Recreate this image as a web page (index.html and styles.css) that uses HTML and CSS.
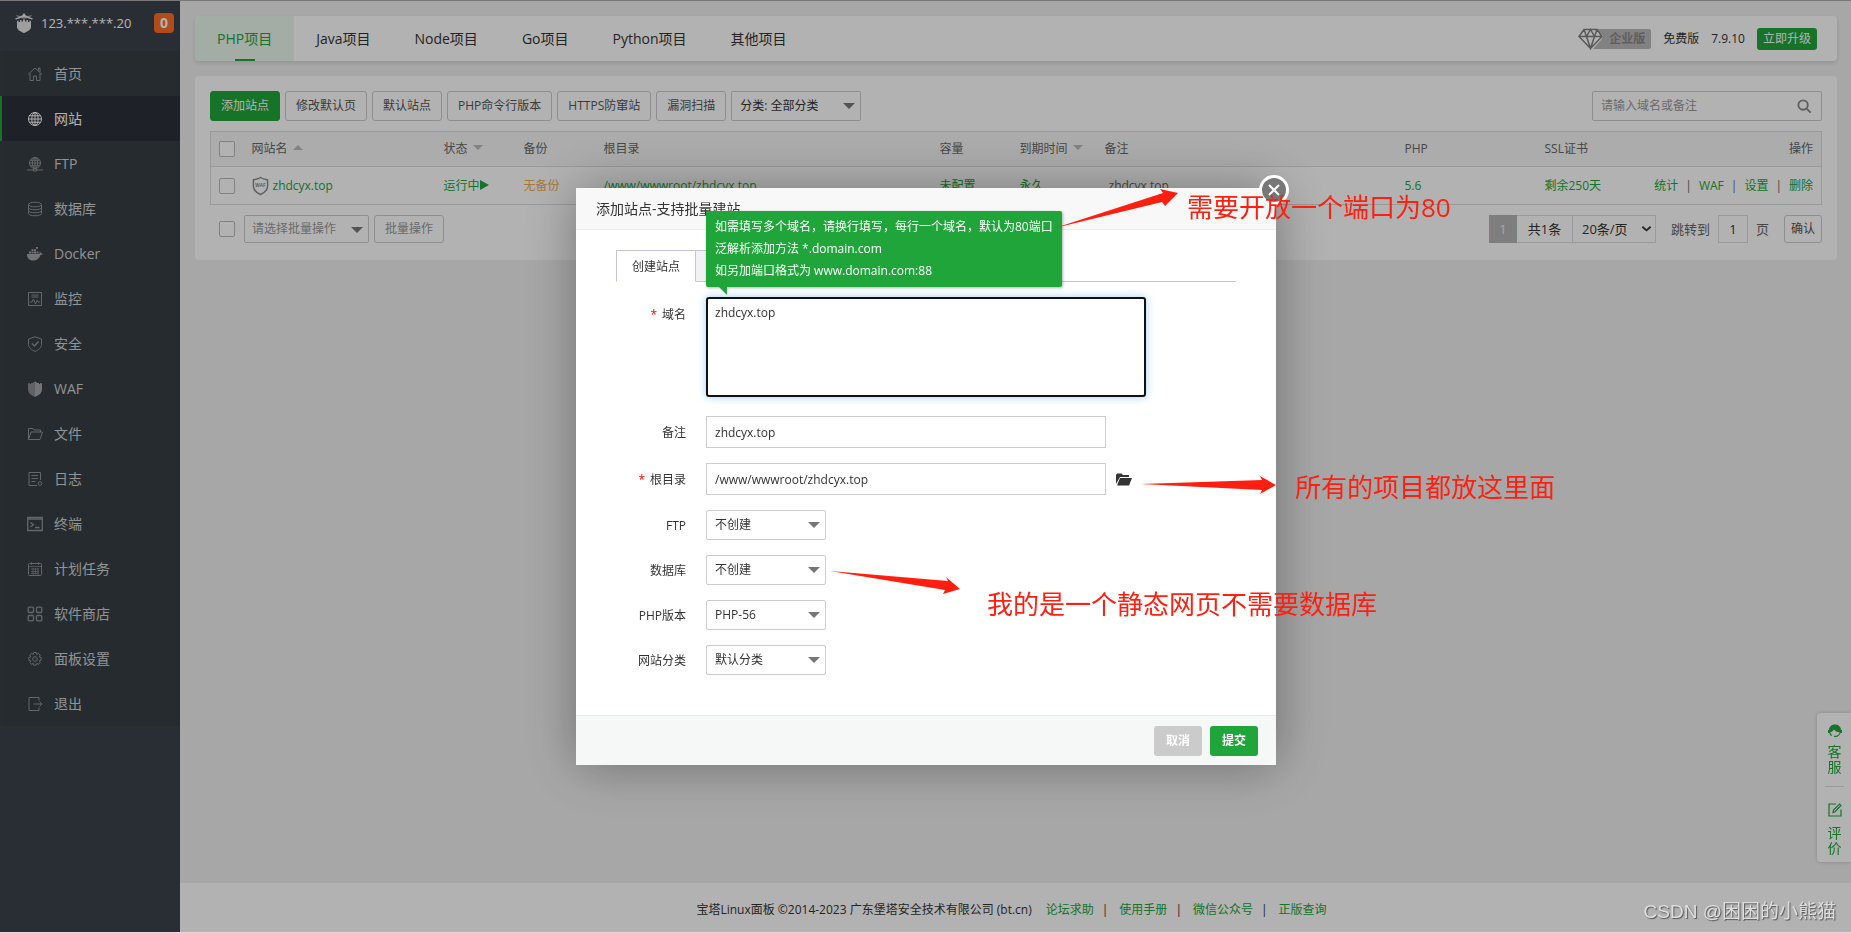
FILE: index.html
```html
<!DOCTYPE html>
<html lang="zh-CN">
<head>
<meta charset="utf-8">
<title>宝塔Linux面板</title>
<link rel="stylesheet" href="styles.css">
</head>
<body>
<div class="layout">
  <aside class="sidebar">
    <div class="server">
      <svg class="server-logo" viewBox="0 0 18 20" fill="currentColor"><path d="M0 5.500 4 4 7 2.500 9 0l2 2.500L14 4l4 1.500-1 1L9 4 1 6.500z"/><path d="M1 2l6 1.500L9 4l2-.5L17 2l-1 1.500L9 6 2 3.500z" opacity=".6"/><path d="M2 8l1.500-.5V9H5V7h1.500v1.500H8V6.500h2v2h1.500V7H13v2h1.500V7.500L16 8v6c0 2.500-3 4.500-7 6-4-1.500-7-3.500-7-6z"/></svg>
      <span class="server-ip">123.***.***.20</span>
      <span class="server-badge">0</span>
    </div>
    <nav class="menu">
      <a href="#"><svg viewBox="0 0 16 16"><path d="M1 8.500 8 2l7 6.500M3 7.500V14.500h3.500V10h3v4.500H13V7.500M11.500 4.500V2H13v4"/></svg>首页</a>
      <a href="#" class="active"><svg viewBox="0 0 16 16"><circle cx="8" cy="8" r="6.500"/><ellipse cx="8" cy="8" rx="3.200" ry="6.500"/><path d="M8 1.500v13M1.500 8h13M2.500 4.800h11M2.500 11.200h11"/></svg>网站</a>
      <a href="#"><svg viewBox="0 0 16 16"><circle cx="8" cy="7" r="5.500"/><ellipse cx="8" cy="7" rx="2.700" ry="5.500"/><path d="M8 1.500v11M2.500 7h11M3.500 4.300h9M3.500 9.700h9M0 14h6.500M9.500 14H16"/><path d="M6.500 13h3v2h-3z"/></svg>FTP</a>
      <a href="#"><svg viewBox="0 0 16 16"><ellipse cx="8" cy="3.500" rx="6.500" ry="2.300"/><path d="M1.500 3.500v9c0 3 13 3 13 0v-9M1.500 6.500c0 3 13 3 13 0M1.500 9.500c0 3 13 3 13 0"/></svg>数据库</a>
      <a href="#"><svg viewBox="0 0 16 16" class="solid"><path d="M0 8h11.500c1 0 1.500-.8 1.200-2.500 1 .6 1.300 1.300 1.300 2 .8-.2 1.500 0 2 .3-.5.900-1.500 1.200-2.500 1.200C12.500 12.500 10 14.500 6 14.500 2 14.500 0 12 0 8z"/><path d="M2 5.500h2v2H2zM4.500 5.500h2v2h-2zM7 5.500h2v2H7zM9.500 5.500h2v2h-2zM4.500 3.200h2v1.800h-2zM7 3.200h2v1.800H7zM9 1h2v1.700H9z"/></svg>Docker</a>
      <a href="#"><svg viewBox="0 0 16 16"><path d="M1.500 1.500h13v13h-13zM4.500 4h7M4.500 6h7M3 11h2l1.500-3 2 5L10 9.500l1 1.500h2"/></svg>监控</a>
      <a href="#"><svg viewBox="0 0 16 16"><path d="M8 .8 14.500 3v5.500c0 3-3 5.500-6.500 6.900C4.500 14 1.500 11.500 1.500 8.500V3z"/><path d="M5 7.500 7.500 10l4-4.500" stroke-width="1.500"/></svg>安全</a>
      <a href="#"><svg viewBox="0 0 16 16" class="solid"><path d="M1 2.500 3 2v1h1V2h2v-.5L8 .5V16c-4-2-7-3.500-7-8z" opacity=".75"/><path d="M8 .5l2 1V2h2v1h1V2l2 .5V8c0 4.500-3 6-7 8z"/></svg>WAF</a>
      <a href="#"><svg viewBox="0 0 16 16"><path d="M1.500 13.500v-11H6l1 1.500h6.500v2M1.500 13.500 4 6h11.500L13 13.500z"/></svg>文件</a>
      <a href="#"><svg viewBox="0 0 16 16"><path d="M10 14.500H2v-13h11.500V9M4.500 4.500h6.500M4.500 7.500h6.500M4.500 10.500h4"/><circle cx="13" cy="12.500" r="1.800"/></svg>日志</a>
      <a href="#"><svg viewBox="0 0 16 16"><path d="M.7 1.500h14.600v13H.7zM.7 3.200h14.600M3.500 6.500l3 2.200-3 2.200M8 11.500h4.500" stroke-width="1.300"/></svg>终端</a>
      <a href="#"><svg viewBox="0 0 16 16"><rect x="1.500" y="2.500" width="13" height="12" rx="1"/><path d="M1.500 5.500h13M4.500 1v3M11.500 1v3M4 8h8M4 10.500h8M4 12.500h8M6 7v6.500M8.500 7v6.500M11 7v6.500" stroke-width=".7"/></svg>计划任务</a>
      <a href="#"><svg viewBox="0 0 16 16" stroke-width="1.300"><rect x="1.200" y="1.200" width="5.300" height="5.300" rx="1"/><rect x="9.500" y="1.200" width="5.300" height="5.300" rx="1"/><rect x="1.200" y="9.500" width="5.300" height="5.300" rx="1"/><rect x="9.500" y="9.500" width="5.300" height="5.300" rx="1"/></svg>软件商店</a>
      <a href="#"><svg viewBox="0 0 16 16"><path d="M6.800 1.500h2.400l.5 1.900 1.800-1 1.700 1.700-1 1.800 1.900.5v2.900l-1.900.5 1 1.800-1.700 1.700-1.800-1-.5 1.900H6.800l-.5-1.900-1.800 1-1.700-1.700 1-1.800-1.900-.5V6.400l1.900-.5-1-1.800 1.700-1.700 1.800 1z"/><circle cx="8" cy="8" r="2.300"/></svg>面板设置</a>
      <a href="#"><svg viewBox="0 0 16 16"><path d="M12 4.500v-3H2v13h10v-3M6.500 8h8.500M12.500 5.500 15 8l-2.500 2.500"/></svg>退出</a>
    </nav>
  </aside>

  <div class="page">
    <main class="content">
      <header class="topbar">
        <nav class="tabs">
          <a href="#" class="active">PHP项目</a>
          <a href="#">Java项目</a>
          <a href="#">Node项目</a>
          <a href="#">Go项目</a>
          <a href="#">Python项目</a>
          <a href="#">其他项目</a>
        </nav>
        <div class="license">
          <span class="edition"><svg viewBox="0 0 26 22"><path class="gem-back" d="M19 1h7v20H15l8-9 2-4z"/><path class="gem" d="M1 8.500 6 1.500h13l5 7-11.500 12zM1 8.500h23M6 1.500l2.500 7 4 12 4-12L19 1.500M8.500 8.500l4-7 4 7"/></svg><b>企业版</b></span>
          <span>免费版</span>
          <span>7.9.10</span>
          <button type="button" class="upgrade">立即升级</button>
        </div>
      </header>

      <section class="panel">
        <div class="toolbar">
          <button type="button" class="btn primary">添加站点</button>
          <button type="button" class="btn">修改默认页</button>
          <button type="button" class="btn">默认站点</button>
          <button type="button" class="btn">PHP命令行版本</button>
          <button type="button" class="btn">HTTPS防窜站</button>
          <button type="button" class="btn">漏洞扫描</button>
          <span class="select category"><select aria-label="分类"><option>分类: 全部分类</option></select></span>
          <label class="search">
            <input type="text" placeholder="请输入域名或备注" aria-label="搜索">
            <svg viewBox="0 0 16 16"><circle cx="6.500" cy="6.500" r="5"/><path d="m10.500 10.500 4 4"/></svg>
          </label>
        </div>

        <table class="sites">
          <colgroup><col class="c-check"><col class="c-name"><col class="c-s"><col class="c-s"><col class="c-root"><col class="c-s"><col class="c-date"><col class="c-note"><col class="c-php"><col class="c-ssl"><col></colgroup>
          <thead>
            <tr><th><input type="checkbox" aria-label="全选"></th><th>网站名<i class="sort up"></i></th><th>状态<i class="sort"></i></th><th>备份</th><th>根目录</th><th>容量</th><th>到期时间<i class="sort"></i></th><th>备注</th><th>PHP</th><th>SSL证书</th><th class="right">操作</th></tr>
          </thead>
          <tbody>
            <tr>
              <td><input type="checkbox" aria-label="zhdcyx.top"></td>
              <td><a href="#" class="site"><svg viewBox="0 0 18 20"><path d="M9 1c2 1.500 5 2 7.500 2.500V10c0 4-3 7-7.500 9C4.500 17 1.500 14 1.500 10V3.500C4 3 7 2.500 9 1z"/><text x="9" y="11" text-anchor="middle">WAF</text></svg>zhdcyx.top</a></td>
              <td><a href="#" class="running">运行中<i></i></a></td>
              <td><a href="#" class="warn">无备份</a></td>
              <td><a href="#">/www/wwwroot/zhdcyx.top</a></td>
              <td><a href="#">未配置</a></td>
              <td><a href="#">永久</a></td>
              <td class="note">zhdcyx.top</td>
              <td><a href="#">5.6</a></td>
              <td><a href="#">剩余250天</a></td>
              <td class="right ops"><a href="#">统计</a>|<a href="#">WAF</a>|<a href="#">设置</a>|<a href="#">删除</a></td>
            </tr>
          </tbody>
        </table>

        <div class="bottom">
          <input type="checkbox" aria-label="批量选择">
          <span class="select batch"><select aria-label="批量操作"><option>请选择批量操作</option></select></span>
          <button type="button" class="btn small muted">批量操作</button>
          <div class="pager">
            <span class="current">1</span><span class="total">共1条</span>
            <span class="per"><select aria-label="每页条数"><option>20条/页</option></select><svg viewBox="0 0 12 8"><path d="m1.500 1.500 4.500 4 4.500-4"/></svg></span>
            <label for="jump" class="jump">跳转到</label><input id="jump" type="text" value="1"><span class="unit">页</span>
            <button type="button" class="btn small confirm">确认</button>
          </div>
        </div>
      </section>
    </main>

    <footer class="footer">
      <span>宝塔Linux面板 ©2014-2023 广东堡塔安全技术有限公司 (bt.cn)</span>
      <a href="#">论坛求助</a><i>|</i><a href="#">使用手册</a><i>|</i><a href="#">微信公众号</a><i>|</i><a href="#">正版查询</a>
    </footer>
  </div>
</div>

<div class="float">
  <a href="#"><svg viewBox="0 0 14 14"><path class="fill" d="M1 6C1 2.500 4 .5 7 .5S13 2.500 13 6h1v3h-1.500c-.5 2-2.500 3.500-4 4H6v-1.200h2.500C10 11.300 11.500 10 11.800 8.500 9 8 7 7 6 5.500 5 7 3.500 8 2.200 8.200c.3 1.300 1 2.300 2 3L3 12C2 11 1.500 10 1.300 9H0V6z"/></svg><span>客服</span></a>
  <a href="#"><svg viewBox="0 0 14 14"><path d="M8 1H1v12h12V6.500M5 9.500 5.500 7 11.500 1 13 2.500 7 8.700z"/></svg><span>评价</span></a>
</div>

<div class="mask">
  <section class="modal" role="dialog" aria-labelledby="dialog-title">
    <h2 id="dialog-title">添加站点-支持批量建站</h2>
    <button type="button" class="close" aria-label="关闭"><svg viewBox="0 0 12 12"><path d="m1 1 10 10M11 1 1 11"/></svg></button>
    <form class="form">
      <div class="form-tabs"><button type="button" class="on">创建站点</button><button type="button" aria-label="批量创建"></button></div>
      <div class="row tall"><label for="domain"><em>*</em>域名</label><textarea id="domain">zhdcyx.top</textarea></div>
      <div class="row"><label for="remark">备注</label><input id="remark" type="text" value="zhdcyx.top"></div>
      <div class="row"><label for="root"><em>*</em>根目录</label><input id="root" type="text" value="/www/wwwroot/zhdcyx.top"><svg class="folder" viewBox="0 0 16 13"><path d="M0 11V2L1 .5h4.500L7 2h6v2H4z"/><path d="M4 5h12l-3 7.500H1z"/></svg></div>
      <div class="row"><label for="ftp">FTP</label><span class="select"><select id="ftp"><option>不创建</option></select></span></div>
      <div class="row"><label for="db">数据库</label><span class="select"><select id="db"><option>不创建</option></select></span></div>
      <div class="row"><label for="php">PHP版本</label><span class="select"><select id="php"><option>PHP-56</option></select></span></div>
      <div class="row"><label for="cat">网站分类</label><span class="select"><select id="cat"><option>默认分类</option></select></span></div>
    </form>
    <div class="actions"><button type="button" class="cancel">取消</button><button type="button" class="submit">提交</button></div>

    <div class="tip">如需填写多个域名，请换行填写，每行一个域名，默认为80端口<br>泛解析添加方法 *.domain.com<br>如另加端口格式为 www.domain.com:88</div>

    <svg class="arrows" viewBox="0 0 700 577"><path d="M479 40 587 5 584 1l18 4-13 13-3-4z"/><path d="m565 296 121-4-2-4 16 9-16 9 2-4z"/><path d="m254 383 118 10-2-4 14 12-17 5 2-4z"/></svg>
    <p class="mark m1">需要开放一个端口为80</p>
    <p class="mark m2">所有的项目都放这里面</p>
    <p class="mark m3">我的是一个静态网页不需要数据库</p>
  </section>
</div>
<div class="watermark">CSDN @困困的小熊猫</div>
</body>
</html>
```
FILE: styles.css
```css
* { box-sizing: border-box; }
body {
  margin: 0;
  font: 12px/18px "Open Sans", "Noto Sans CJK SC", sans-serif;
  color: #333;
  background: #f0f0f0;
}
a { color: #20a53a; text-decoration: none; }
button, input, select, textarea { font: inherit; color: inherit; margin: 0; }
i, em { font-style: normal; }

.layout { display: flex; min-height: 100vh; padding-top: 1px; }

/* sidebar */
.sidebar { flex: 0 0 180px; background: #3c424d; }
.server { display: flex; align-items: center; height: 50px; padding: 0 6px 6px 15px; font-size: 14px; color: #fff; }
.server-logo { width: 18px; height: 20px; margin-right: 8px; color: #e4e4e4; }
.server-ip { font-size: 13px; }
.server-badge {
  margin-left: auto; width: 20px; height: 20px; border-radius: 4px;
  background: #fc6d26; text-align: center; line-height: 20px; font-weight: 700;
}
.menu a {
  display: flex; align-items: center; gap: 11px; height: 45px; padding-left: 25px;
  border-left: 2px solid #3a4047; background: #363e43; color: #d0d4d6; font-size: 14px;
}
.menu a.active { border-color: #20a53a; background: #2c3038; color: #fff; }
.menu svg { width: 16px; height: 16px; fill: none; stroke: #8f9497; }
.menu .solid { fill: #a4a7a9; stroke: none; }
.menu .active svg { stroke: #fff; }

/* page */
.page { flex: 1; min-width: 0; display: flex; flex-direction: column; }
.content { flex: 1; padding: 15px 14px 0 15px; }
.topbar {
  display: flex; justify-content: space-between; height: 45px; margin-bottom: 15px;
  background: #fff; border-radius: 4px; box-shadow: 0 2px 4px rgba(0,0,0,.12);
}
.tabs { display: flex; font-size: 14px; }
.tabs a { position: relative; padding: 0 22px; line-height: 45px; color: #333; }
.tabs .active { background: #eaf6ec; color: #20a53a; border-radius: 4px 0 0 4px; }
.tabs .active::after {
  content: ""; position: absolute; left: 50%; bottom: 0; width: 20px; height: 2px;
  margin-left: -10px; background: #20a53a;
}
.license { display: flex; align-items: center; gap: 12px; padding: 0 20px 0 0; }
.edition { display: flex; align-items: center; height: 20px; background: linear-gradient(90deg, transparent 26px, #bbb 26px); border-radius: 2px; }
.edition svg { width: 26px; height: 22px; }
.edition b { padding: 0 6px 0 5px; color: #888; }
.gem-back { fill: #bbb; }
.gem { fill: #fff; stroke: #808080; stroke-width: 1.5; }
.upgrade { height: 22px; padding: 0 6px; border: 0; border-radius: 3px; background: #20a53a; color: #fff; }

.panel { padding: 15px 15px 17px; background: #fff; border-radius: 4px; }
.toolbar { display: flex; gap: 5px; margin-bottom: 10px; }
.btn { height: 30px; padding: 0 10px; border: 1px solid #ccc; border-radius: 3px; background: #fff; color: #555; }
.btn.primary { background: #20a53a; border-color: #20a53a; color: #fff; }
.btn.small { height: 28px; }
.btn.muted { color: #999; }
.btn.confirm { padding: 0 6px; margin-left: 15px; }

.select { position: relative; display: block; width: 120px; height: 30px; }
.select select {
  appearance: none; width: 100%; height: 100%; padding: 0 24px 0 8px;
  border: 1px solid #ccc; border-radius: 2px; background: #fff; color: #333;
}
.select::after {
  content: ""; position: absolute; right: 6px; top: 12px;
  border: 6px solid transparent; border-top-color: #777; border-bottom: 0;
  pointer-events: none;
}
.category { width: 130px; }
.batch { width: 125px; height: 28px; }
.batch select { padding-left: 7px; color: #999; }

.search {
  display: flex; align-items: center; width: 230px; height: 30px; margin-left: auto;
  padding: 0 9px 0 8px; border: 1px solid #ccc; border-radius: 2px;
}
.search input { flex: 1; min-width: 0; padding: 0; border: 0; background: none; }
.search input::placeholder { color: #999; }
.search svg { width: 15px; height: 15px; fill: none; stroke: #888; stroke-width: 2; }

input[type=checkbox] { appearance: none; display: block; width: 16px; height: 16px; border: 1px solid #bbb; border-radius: 2px; background: #fff; }

.sites { width: 100%; table-layout: fixed; border-collapse: collapse; border: 1px solid #ddd; margin-bottom: 10px; }
.sites th { height: 35px; padding: 0 8px; background: #f6f6f6; border-bottom: 1px solid #ddd; text-align: left; font-weight: 400; color: #666; white-space: nowrap; }
.sites td { height: 38px; padding: 0 8px; white-space: nowrap; color: #666; }
.sites .right { text-align: right; }
.sites .note { padding-left: 12px; }
.ops a { margin: 0 7px; }
.ops a:first-child { margin-left: 0; }
.ops a:last-child { margin-right: 0; }
.c-check { width: 33px; }
.c-name { width: 192px; }
.c-s { width: 80px; }
.c-root { width: 336px; }
.c-date { width: 85px; }
.c-note { width: 300px; }
.c-php { width: 140px; }
.c-ssl { width: 90px; }
.sort { display: inline-block; margin: 0 0 3px 5px; border: 5px solid transparent; border-top-color: #bbb; border-bottom: 0; }
.sort.up { border-top: 0; border-bottom: 5px solid #bbb; }
.site { display: flex; align-items: center; gap: 4px; }
.site svg { width: 17px; height: 20px; fill: none; stroke: #888; stroke-width: 1.5; }
.site text { font-size: 5px; font-weight: 700; fill: #888; stroke: none; }
.running i { display: inline-block; border: 5px solid transparent; border-left: 9px solid #20a53a; border-right: 0; }
.sites .warn { color: #f0ad4e; }

.bottom { display: flex; align-items: center; gap: 5px; padding-left: 9px; }
.bottom > input { margin-right: 4px; }
.pager { display: flex; align-items: center; margin-left: auto; height: 28px; font-size: 13px; }
.pager .current { width: 28px; line-height: 28px; text-align: center; background: #b5b5b5; color: #eee; }
.pager .total { width: 56px; line-height: 26px; border: 1px solid #ddd; border-left: 0; text-align: center; }
.per { position: relative; width: 83px; height: 28px; }
.per select { appearance: none; width: 100%; height: 28px; padding: 0 20px 0 9px; border: 1px solid #ddd; border-left: 0; background: #fff; }
.per svg { position: absolute; right: 4px; top: 10px; width: 11px; height: 8px; fill: none; stroke: #333; stroke-width: 2; pointer-events: none; }
.jump { margin: 0 8px 0 15px; color: #666; }
.pager input { width: 30px; height: 28px; padding: 0; border: 1px solid #ddd; text-align: center; background: #fff; }
.unit { margin-left: 8px; color: #666; }
.pager .btn { font-size: 12px; }

.footer { display: flex; justify-content: center; height: 50px; padding: 2px 8px 0 0; background: #fff; line-height: 50px; }
.footer span { margin-right: 14px; }
.footer i { margin: 0 11px 0 8px; }

/* floating service bar */
.float {
  position: fixed; right: 0; bottom: 71px; width: 34px; padding: 11px 7px 4px 8px;
  background: #fff; border-radius: 4px 0 0 4px; box-shadow: 0 0 4px rgba(0,0,0,.2);
}
.float a { display: flex; flex-direction: column; align-items: center; gap: 6px; font-size: 14px; line-height: 15px; padding-bottom: 12px; }
.float a + a { border-top: 1px solid #ddd; padding: 16px 0 3px; gap: 8px; }
.float span { width: 14px; }
.float svg { width: 14px; height: 14px; fill: none; stroke: #20a53a; stroke-width: 1.200; }
.float .fill { fill: #20a53a; stroke: none; }

/* dialog */
.mask {
  position: fixed; inset: 0; display: flex; justify-content: center; align-items: flex-start;
  padding: 187px 0 0 1px; background: rgba(0,0,0,.3); background-clip: padding-box;
  border-top: 1px solid #777; border-bottom: 1px solid #ddd;
}
.modal { position: relative; width: 700px; background: #fff; box-shadow: 1px 1px 50px rgba(0,0,0,.35); }
.modal h2 { height: 42px; margin: 0; padding: 0 20px; background: #f8f8f8; border-bottom: 1px solid #eee; font-size: 14px; font-weight: 400; line-height: 42px; }
.close {
  position: absolute; right: -13px; top: -13px; width: 30px; height: 30px; padding: 0;
  display: grid; place-items: center; border: 3px solid #fff; border-radius: 50%; background: #777;
}
.close svg { width: 12px; height: 12px; stroke: #fff; stroke-width: 2; }
.form { padding: 20px 40px 25px; }
.form-tabs { display: flex; height: 32px; margin-bottom: 15px; border-bottom: 1px solid #c8c5d3; }
.form-tabs button { width: 80px; height: 32px; padding: 2px 0 0; border: 1px solid #c8c5d3; border-left: 0; background: #f2f2f5; }
.form-tabs .on { border-left: 1px solid #c8c5d3; border-bottom-color: #fff; background: #fff; }
.row { display: flex; align-items: center; margin-bottom: 15px; }
.row.tall { align-items: flex-start; margin-bottom: 19px; }
.row label { width: 70px; margin-right: 20px; padding-top: 2px; text-align: right; }
.row.tall label { line-height: 32px; }
.row em { margin-right: 5px; color: #f00; }
.row input { width: 400px; height: 32px; padding: 0 8px; border: 1px solid #ccc; }
.row textarea {
  display: block; width: 440px; height: 100px; padding: 3px 7px; resize: none; outline: 0; line-height: 22px;
  border: 2px solid #111; border-radius: 3px; box-shadow: 0 0 8px rgba(102,175,233,.6);
}
.folder { width: 16px; height: 13px; margin-left: 10px; fill: #333; }
.actions { display: flex; justify-content: flex-end; gap: 8px; padding: 10px 18px 9px; background: #f6f8f8; border-top: 1px solid #e8ecec; }
.actions button { width: 48px; height: 30px; padding: 0; border: 0; border-radius: 3px; color: #fff; font-weight: 700; }
.actions .cancel { background: #cbcbcb; }
.actions .submit { background: #20a53a; }

.tip {
  position: absolute; left: 130px; top: 23px; padding: 5px 9px; line-height: 22px; white-space: nowrap;
  background: #20a53a; color: #fff; border-radius: 2px; box-shadow: 1px 1px 3px rgba(0,0,0,.3);
}
.tip::after { content: ""; position: absolute; left: 13px; top: 100%; border-top: 8px solid #20a53a; border-left: 8px solid transparent; }
.arrows { position: absolute; left: 0; top: 0; width: 700px; height: 577px; overflow: visible; fill: #ff1f10; pointer-events: none; }
.mark { position: absolute; margin: 0; font-size: 26px; line-height: 36px; color: #ff1f10; white-space: nowrap; }
.m1 { left: 611px; top: 1px; }
.m2 { left: 719px; top: 281px; }
.m3 { left: 411px; top: 398px; }

.watermark {
  position: fixed; right: 15px; bottom: 6px; font: 19px/30px "Liberation Sans", "Noto Sans CJK SC", sans-serif;
  color: #dedede; text-shadow: 1px 1px 1px #555;
}
```
